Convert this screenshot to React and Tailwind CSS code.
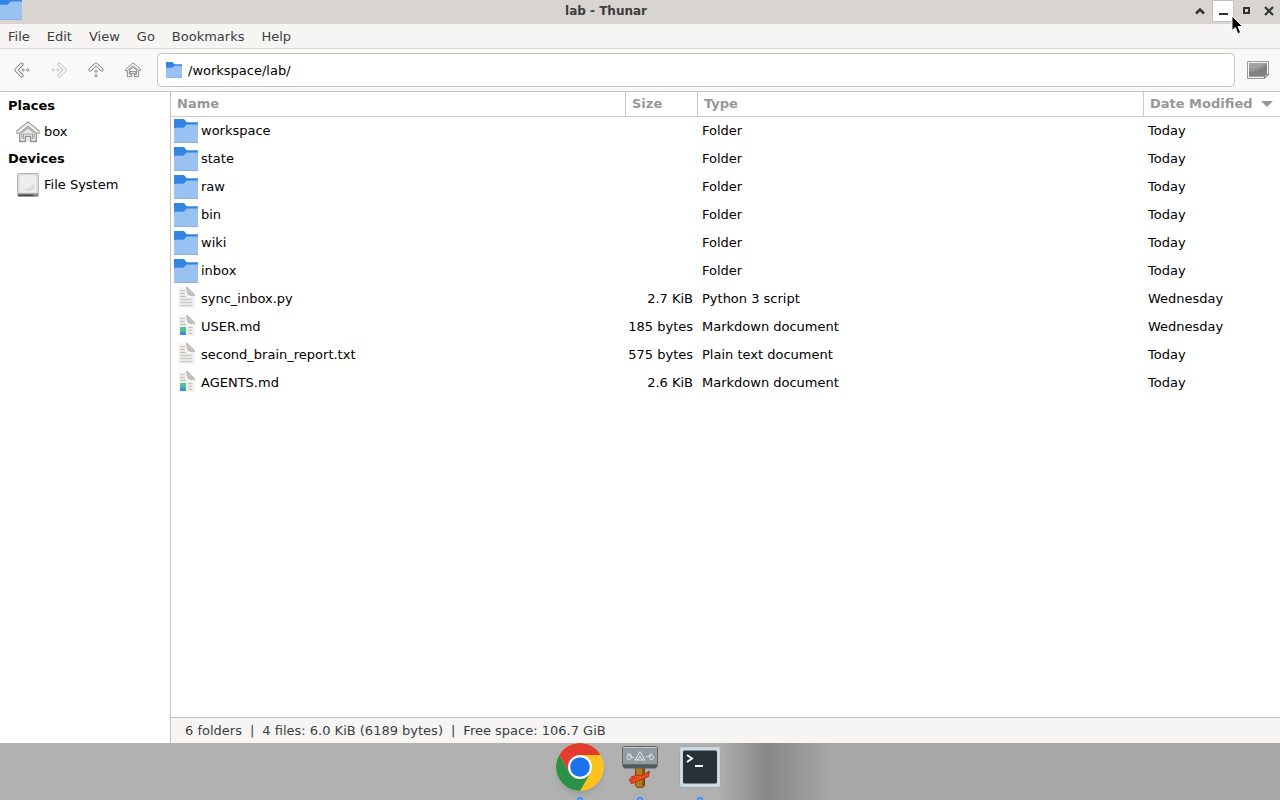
import React, { useState } from 'react';

const MENUS = ['File', 'Edit', 'View', 'Go', 'Bookmarks', 'Help'];

const FILES = [
    { name: 'workspace', icon: 'folder', size: '', type: 'Folder', date: 'Today' },
    { name: 'state', icon: 'folder', size: '', type: 'Folder', date: 'Today' },
    { name: 'raw', icon: 'folder', size: '', type: 'Folder', date: 'Today' },
    { name: 'bin', icon: 'folder', size: '', type: 'Folder', date: 'Today' },
    { name: 'wiki', icon: 'folder', size: '', type: 'Folder', date: 'Today' },
    { name: 'inbox', icon: 'folder', size: '', type: 'Folder', date: 'Today' },
    { name: 'sync_inbox.py', icon: 'text', size: '2.7 KiB', type: 'Python 3 script', date: 'Wednesday' },
    { name: 'USER.md', icon: 'markdown', size: '185 bytes', type: 'Markdown document', date: 'Wednesday' },
    { name: 'second_brain_report.txt', icon: 'text', size: '575 bytes', type: 'Plain text document', date: 'Today' },
    { name: 'AGENTS.md', icon: 'markdown', size: '2.6 KiB', type: 'Markdown document', date: 'Today' },
];

const FolderIcon = ({ className }) => (
    <svg viewBox="0 0 24 24" className={className} aria-hidden="true">
        <path d="M0 0h8.800c1 0 1.800.4 2.300 1.300l.8 1.200c.3.500.7.700 1.300.700H24V12H0z" fill="#3584e4" />
        <path d="M0 8.800h8.600c.8 0 1.300-.3 1.800-.9l1.500-1.600c.5-.5.900-.7 1.600-.7H24V24H0z" fill="#99c1f1" />
        <path d="M0 23.500h24" stroke="#8ab2e6" strokeWidth="1" />
    </svg>
);

const TextFileIcon = ({ className }) => (
    <svg viewBox="0 0 24 24" className={className} aria-hidden="true">
        <path d="M4 0h9l8 9v12H4z" fill="#f6f5f4" />
        <path d="M12 0h1.800L21 7.200V9h-3.800c-2.200 0-4.200-2-4.600-4z" fill="#c3c1bd" />
        <path d="M6 3.500h5M6 6.500h5M6 9.500h6M6 12.500h12.500M6 15.500h12.500M6 18.500h12.500" stroke="#c9c7c4" strokeWidth="1.500" />
    </svg>
);

const MarkdownIcon = ({ className }) => (
    <svg viewBox="0 0 24 24" className={className} aria-hidden="true">
        <path d="M4 0h9l8 9v12H4z" fill="#f6f5f4" />
        <path d="M12 0h1.800L21 7.200V9h-3.800c-2.200 0-4.200-2-4.600-4z" fill="#c3c1bd" />
        <path d="M6 3.500h5M6 6.500h5M6 9.500h6M14 12.500h4.500M14 15.500h4.500M14 18.500h4.500" stroke="#c9c7c4" strokeWidth="1.500" />
        <path d="M6 12h6v5H6z" fill="#4cc392" />
        <path d="M6 17l3-.8 3 1v2.800H6z" fill="#3f8be6" />
    </svg>
);

const FileIcon = ({ kind }) => {
    switch (kind) {
        case 'folder':
            return <FolderIcon className="size-6 shrink-0" />;
        case 'markdown':
            return <MarkdownIcon className="size-6 shrink-0" />;
        default:
            return <TextFileIcon className="size-6 shrink-0" />;
    }
};

// Outlined chevron with two dots behind it, rotated for each direction
const ArrowIcon = ({ className }) => (
    <svg viewBox="0 0 16 16" className={className} fill="none" aria-hidden="true">
        <path d="M7.800 2.200L2.200 8l5.600 5.800" stroke="currentColor" strokeWidth="3.400" strokeLinecap="round" strokeLinejoin="round" />
        <path d="M7.800 2.200L2.200 8l5.600 5.800" stroke="#f9f9f8" strokeWidth="1.900" strokeLinecap="round" strokeLinejoin="round" />
        <circle cx="9.200" cy="8" r="1.100" stroke="currentColor" strokeWidth="0.800" />
        <circle cx="13.700" cy="8" r="1.100" stroke="currentColor" strokeWidth="0.800" />
    </svg>
);

const HomeIcon = ({ className }) => (
    <svg viewBox="0 0 16 16" className={className} fill="none" stroke="currentColor" strokeWidth="0.800" strokeLinejoin="round" aria-hidden="true">
        <path d="M8 .8L.6 7.200v1.400h1.600L8 3.800l5.800 4.800h1.600V7.200z" />
        <path d="M2.400 8.800v5.900h4.200v-3.400h2.800v3.400h4.200V8.800" />
        <path d="M4.400 8v4.700M11.600 8v4.700M4.400 8L8 5.400 11.600 8M5.200 12.900V9.600h5.600v3.300" />
    </svg>
);

const PlaceHomeIcon = () => (
    <svg viewBox="0 0 24 24" className="size-6" fill="none" strokeLinejoin="round" aria-hidden="true">
        <path d="M3.500 11.500v10h17v-10L12 4.500z" fill="#e9e8e6" />
        <path d="M12 1.800L.8 11v2.300h2.700L12 6.200l8.500 7.100h2.700V11z" fill="#f1f0ef" stroke="#9a9996" strokeWidth="1.100" />
        <path d="M3.600 13.500v8h5.800v-5.200h5.200v5.200h5.800v-8" stroke="#929190" strokeWidth="1.300" />
        <path d="M6 12.400v6.300M18 12.400v6.300M6 12.400L12 8l6 4.400M7.500 19v-5h9v5" stroke="#a7a6a4" strokeWidth="1.100" />
    </svg>
);

const DriveIcon = () => (
    <svg viewBox="0 0 24 24" className="size-6" aria-hidden="true">
        <rect x="1.500" y="0.500" width="21" height="23" rx="1.500" fill="#deddda" stroke="#bbb9b6" />
        <rect x="3" y="1.500" width="18" height="18.500" rx="3" fill="#efeeec" stroke="#cfcecb" strokeWidth="0.700" />
        <path d="M6 16c5 .7 9-2 12-6v6.500c-3 1.600-9 2-12-.5z" fill="#dddcd9" />
        <path d="M2 20.500h20v2c0 .6-.4 1-1 1H3c-.6 0-1-.4-1-1z" fill="#8a898a" />
        <path d="M2.500 22.300h15" stroke="#4c4b50" strokeWidth="1.600" />
    </svg>
);

const ImagePreviewIcon = () => (
    <svg viewBox="0 0 22 18" className="h-[18px] w-[22px]" aria-hidden="true">
        <path d="M.5.5h21v13l-4 4H.5z" fill="#f3f3f2" stroke="#9a9a99" />
        <path d="M2 2h18v10.500l-3.500 3H2z" fill="#929392" />
        <path d="M2 11C8 11 14 8 20 4v8.500l-3.500 3H2z" fill="#808180" />
        <path d="M2 7C8 8 14 6 19 2H2z" fill="#a2a3a2" />
        <path d="M17.500 17.200v-3.700h3.700z" fill="#d8d8d7" stroke="#6b6b6b" strokeWidth="0.800" />
    </svg>
);

const TitleBar = () => (
    <header className="flex h-6 items-start bg-[#d8d4d0]">
        <div className="h-[21px] w-[22px] overflow-hidden">
            <FolderIcon className="-mt-1 -ml-0.5 size-6" />
        </div>
        <h1 className="flex-1 pt-0.5 text-center text-xs leading-[18px] font-bold text-[#3d3d3d]">lab - Thunar</h1>
        <div className="flex gap-[3px] pt-px pr-px text-[#2e3436]">
            <button aria-label="Roll up" className="flex size-5 items-center justify-center">
                <svg viewBox="0 0 10 10" className="size-2.5" fill="none" stroke="currentColor" strokeWidth="2.500">
                    <path d="M1 7.500l4-4 4 4" />
                </svg>
            </button>
            <button aria-label="Minimize" className="flex size-5 items-center justify-center bg-white outline outline-[#c4c0bc]">
                <svg viewBox="0 0 10 10" className="size-2.5" fill="none" stroke="currentColor" strokeWidth="2">
                    <path d="M1 8h9" />
                </svg>
            </button>
            <button aria-label="Maximize" className="flex size-5 items-center justify-center">
                <svg viewBox="0 0 10 10" className="size-2.5" fill="none" stroke="currentColor" strokeWidth="2">
                    <path d="M3 2h5v5H3z" />
                </svg>
            </button>
            <button aria-label="Close" className="flex size-5 items-center justify-center">
                <svg viewBox="0 0 10 10" className="size-2.5" fill="none" stroke="currentColor" strokeWidth="2.200">
                    <path d="M1 1l8 8M9 1L1 9" />
                </svg>
            </button>
        </div>
    </header>
);

const Toolbar = () => {
    const [path, setPath] = useState('/workspace/lab/');

    return (
        <div className="flex h-[43px] items-center border-b border-[#c5c2be] bg-[#f9f9f8] pl-1 text-[#6e6e6e]">
            <div className="flex gap-px">
                <button aria-label="Back" className="flex h-8 w-9 items-center justify-center">
                    <ArrowIcon className="size-4" />
                </button>
                <button aria-label="Forward" disabled className="flex h-8 w-9 items-center justify-center text-[#bcbcbb]">
                    <ArrowIcon className="size-4 rotate-180" />
                </button>
                <button aria-label="Open parent" className="flex h-8 w-9 items-center justify-center">
                    <ArrowIcon className="size-4 rotate-90" />
                </button>
                <button aria-label="Home" className="flex h-8 w-9 items-center justify-center">
                    <HomeIcon className="size-4" />
                </button>
            </div>
            <label className="ml-1.5 flex h-[34px] flex-1 items-center gap-1.5 rounded-[5px] border border-[#c5c2be] bg-white px-2">
                <FolderIcon className="size-4 shrink-0" />
                <input
                    type="text"
                    aria-label="Location"
                    value={path}
                    onChange={(e) => setPath(e.target.value)}
                    className="min-w-0 flex-1 bg-transparent pt-0.5 text-black outline-none"
                />
            </label>
            <button aria-label="Image preview" className="flex h-8 w-[45px] items-center justify-center">
                <ImagePreviewIcon />
            </button>
        </div>
    );
};

const Sidebar = () => (
    <aside className="w-[171px] shrink-0 border-r border-[#c5c2be] bg-white text-black">
        <h2 className="flex h-[26px] items-center pt-0.5 pl-2 font-bold">Places</h2>
        <a href="#box" className="flex h-[27px] items-center gap-1 pl-4">
            <PlaceHomeIcon />
            box
        </a>
        <h2 className="flex h-[26px] items-center pt-0.5 pl-2 font-bold">Devices</h2>
        <a href="#filesystem" className="flex h-[27px] items-center gap-1 pl-4">
            <DriveIcon />
            File System
        </a>
    </aside>
);

const FileTable = () => (
    <table className="w-full table-fixed border-separate border-spacing-0 bg-white text-black">
        <colgroup>
            <col className="w-[454px]" />
            <col className="w-[72px]" />
            <col />
            <col className="w-[137px]" />
        </colgroup>
        <thead>
            <tr className="h-[25px] text-left text-[#969898]">
                <th className="border-b border-[#cdcac7] px-1.5 py-0">Name</th>
                <th className="border-b border-l border-[#cdcac7] px-1.5 py-0">Size</th>
                <th className="border-b border-l border-[#cdcac7] px-1.5 py-0">Type</th>
                <th className="border-b border-l border-[#cdcac7] px-1.5 py-0">
                    <span className="flex items-center gap-2 whitespace-nowrap">
                        Date Modified
                        <svg viewBox="0 0 12 6" className="h-1.5 w-3" fill="currentColor" aria-hidden="true">
                            <path d="M0 0h12L6 6z" />
                        </svg>
                    </span>
                </th>
            </tr>
        </thead>
        <tbody>
            {FILES.map((file) => (
                <tr key={file.name} className="h-7">
                    <td className="py-0 pl-[3px]">
                        <div className="flex items-center gap-[3px]">
                            <FileIcon kind={file.icon} />
                            {file.name}
                        </div>
                    </td>
                    <td className="py-0 pr-1 text-right whitespace-nowrap">{file.size}</td>
                    <td className="px-[5px] py-0">{file.type}</td>
                    <td className="px-[5px] py-0">{file.date}</td>
                </tr>
            ))}
        </tbody>
    </table>
);

const ChromeIcon = () => (
    <svg viewBox="0 0 48 48" className="size-12 rounded-full shadow-md" aria-hidden="true">
        <circle cx="24" cy="24" r="24" fill="#fcc31e" />
        <path d="M3.200 12A24 24 0 0 1 44.800 12H24L13.600 30z" fill="#e33b2e" />
        <path d="M3.200 12A24 24 0 0 0 24 48L34.400 30 24 36 13.600 30z" fill="#2b9146" />
        <circle cx="24" cy="24" r="12" fill="#fff" />
        <circle cx="24" cy="24" r="9.800" fill="#1a73e8" />
    </svg>
);

const HammerIcon = () => (
    <svg viewBox="0 0 48 48" className="size-12" aria-hidden="true">
        <path d="M19.500 23h9v19c0 1.500-1 2.500-4.500 2.500s-4.500-1-4.500-2.500z" fill="#b87a17" stroke="#6b4a12" />
        <path d="M26 23h2v20h-2z" fill="#8a5a10" />
        <path d="M6.500 20h35v3.500l-2 2h-31l-2-2z" fill="#515c61" />
        <rect x="6.500" y="3.500" width="35" height="18" rx="1.500" fill="#939ca0" stroke="#5f696e" />
        <path d="M7 4.500h34" stroke="#c5cbcd" />
        <path d="M24 8.500l-5 8.500h10zM21.500 17l2.500-4 2.500 4" fill="none" stroke="#dfe4e6" />
        <circle cx="13" cy="14.500" r="2" fill="none" stroke="#dfe4e6" />
        <circle cx="35.500" cy="14.500" r="2" fill="none" stroke="#dfe4e6" />
        <path d="M11 11h3.500l1 3M15 14.500h3M33.500 14l.5-3h2.500M30 13.500h3.500" fill="none" stroke="#dfe4e6" />
        <path d="M13 36.500l3-1-1-1.500 6-2 5 .5 7.500-4.500-1 5.500-6 2.500-7 3-4 2-1.500-3z" fill="#e2421c" stroke="#b52f10" strokeWidth="0.800" />
        <path d="M17 38l6-2 8-4M19 34l6 0" fill="none" stroke="#f26a3a" strokeWidth="0.800" />
    </svg>
);

const TerminalIcon = () => (
    <svg viewBox="0 0 48 48" className="size-12" aria-hidden="true">
        <rect x="3.500" y="3.500" width="41" height="41" rx="2.500" fill="#cfd8dc" stroke="#a3abb0" />
        <rect x="7" y="7.500" width="34" height="33" rx="1.500" fill="#263238" />
        <path d="M11 12l5 3.500-5 3.500" fill="none" stroke="#fff" strokeWidth="2" />
        <path d="M19 23h8" stroke="#fff" strokeWidth="2" />
    </svg>
);

const DOCK_ITEMS = [
    { label: 'Chrome', Icon: ChromeIcon },
    { label: 'Tools', Icon: HammerIcon },
    { label: 'Terminal', Icon: TerminalIcon },
];

const Dock = () => (
    <nav className="flex h-[57px] shrink-0 justify-center gap-3 overflow-hidden bg-linear-to-r from-[#b1b1b1] from-56% via-[#878787] via-60% to-[#a8a8a8] to-65%">
        {DOCK_ITEMS.map(({ label, Icon }) => (
            <button key={label} aria-label={label} className="flex h-[60px] w-12 flex-col items-center justify-between">
                <Icon />
                <span className="size-1.5 rounded-full border-2 border-[#4a8ee8] bg-[#a9ccf5] shadow-[0_0_4px_#6fa8ee]"></span>
            </button>
        ))}
    </nav>
);

// Mouse pointer resting over the window buttons
const Pointer = () => (
    <svg viewBox="0 0 12 20" className="pointer-events-none absolute top-[15px] right-[37px] h-5 w-3" aria-hidden="true">
        <path d="M1 1v14.500l3.300-3 2.600 6.200 2.700-1.200L7 11.500h4.500z" fill="#000" stroke="#fff" strokeWidth="0.900" />
    </svg>
);

const App = () => {
    return (
        <div className="relative flex min-h-screen flex-col font-['DejaVu_Sans',sans-serif] text-[13px] leading-[18px]">
            <TitleBar />

            {/* Menu bar */}
            <nav className="flex h-[25px] items-center gap-px border-b border-[#dbd9d6] bg-[#f6f5f4] pt-0.5 text-[#3a3f41]">
                {MENUS.map((menu) => (
                    <button key={menu} className="px-2">{menu}</button>
                ))}
            </nav>

            <Toolbar />

            <div className="flex flex-1">
                <Sidebar />
                <main className="flex min-w-0 flex-1 flex-col bg-white">
                    <div className="flex-1">
                        <FileTable />
                    </div>
                    <footer className="flex h-[26px] items-center gap-2 border-t border-[#c5c2be] bg-[#f6f5f4] pl-3.5 text-[#3a3f41]">
                        <span>6 folders</span>
                        <span>|</span>
                        <span>4 files: 6.0 KiB (6189 bytes)</span>
                        <span>|</span>
                        <span>Free space: 106.7 GiB</span>
                    </footer>
                </main>
            </div>

            <Dock />
            <Pointer />
        </div>
    );
};

export default App;
